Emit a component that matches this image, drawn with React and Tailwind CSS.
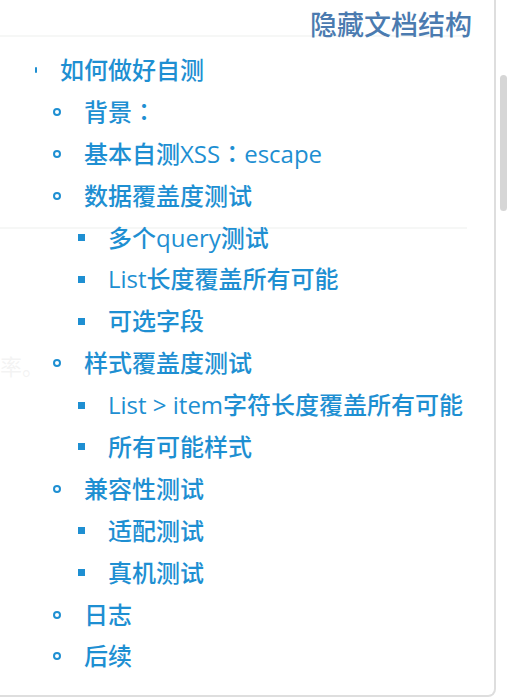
import React from "react";

// outline of the document, level 1..3
const outline = [
  { level: 1, text: "如何做好自测" },
  { level: 2, text: "背景：" },
  { level: 2, text: "基本自测XSS：escape" },
  { level: 2, text: "数据覆盖度测试" },
  { level: 3, text: "多个query测试" },
  { level: 3, text: "List长度覆盖所有可能" },
  { level: 3, text: "可选字段" },
  { level: 2, text: "样式覆盖度测试" },
  { level: 3, text: "List > item字符长度覆盖所有可能" },
  { level: 3, text: "所有可能样式" },
  { level: 2, text: "兼容性测试" },
  { level: 3, text: "适配测试" },
  { level: 3, text: "真机测试" },
  { level: 2, text: "日志" },
  { level: 2, text: "后续" },
];

function Bullet({ level }) {
  if (level === 1) {
    return <span className="ml-[35px] mr-[23px] h-[6px] w-[2px] rounded-full bg-[#1e8fd2]" />;
  }
  if (level === 2) {
    return <span className="ml-[53px] mr-[23px] h-[8px] w-[8px] rounded-full border-2 border-[#1e8fd2]" />;
  }
  return <span className="ml-[78px] mr-[23px] h-[7px] w-[7px] bg-[#1e8fd2]" />;
}

// full-width colon sits centred in the reference, as in the TC face
function Label({ text }) {
  const parts = text.split("：");
  return (
    <span className="whitespace-nowrap">
      {parts.map((p, i) => (
        <React.Fragment key={i}>
          {i > 0 && <span style={{ fontFamily: '"Noto Sans CJK TC", sans-serif' }}>：</span>}
          {p}
        </React.Fragment>
      ))}
    </span>
  );
}

export default function App() {
  return (
    <div
      className="relative h-[698px] w-[508px] overflow-hidden bg-white"
      style={{ fontFamily: '"Open Sans", "Noto Sans CJK SC", sans-serif' }}
    >
      {/* page content behind the floating toc */}
      <div className="w-[467px]">
        <div className="mt-[35px] h-[2px] bg-[#aaa]" />
        <div className="mt-[190px] h-[2px] bg-[#aaa]" />
        <p className="mt-[122px] text-[22px] leading-[30px] text-[#888]">率。</p>
      </div>

      {/* page scrollbar */}
      <div className="absolute right-[1px] top-[75px] h-[136px] w-[7px] rounded-full bg-[#d6d6d6]" />

      <aside className="absolute left-0 top-[-10px] h-[707px] w-[496px] rounded-r-lg border-2 border-l-0 border-[#dedede] bg-white/90">
        <div className="pr-[22px] pt-[15px] text-right text-[27px] font-medium leading-[36px] text-[#4b7bb0]">
          隐藏文档结构
        </div>
        <ul className="mt-[6px]">
          {outline.map((item, i) => (
            <li key={i} className="flex h-[41.9px] items-center text-[24px] font-medium text-[#1e8fd2]">
              <Bullet level={item.level} />
              <Label text={item.text} />
            </li>
          ))}
        </ul>
      </aside>
    </div>
  );
}
